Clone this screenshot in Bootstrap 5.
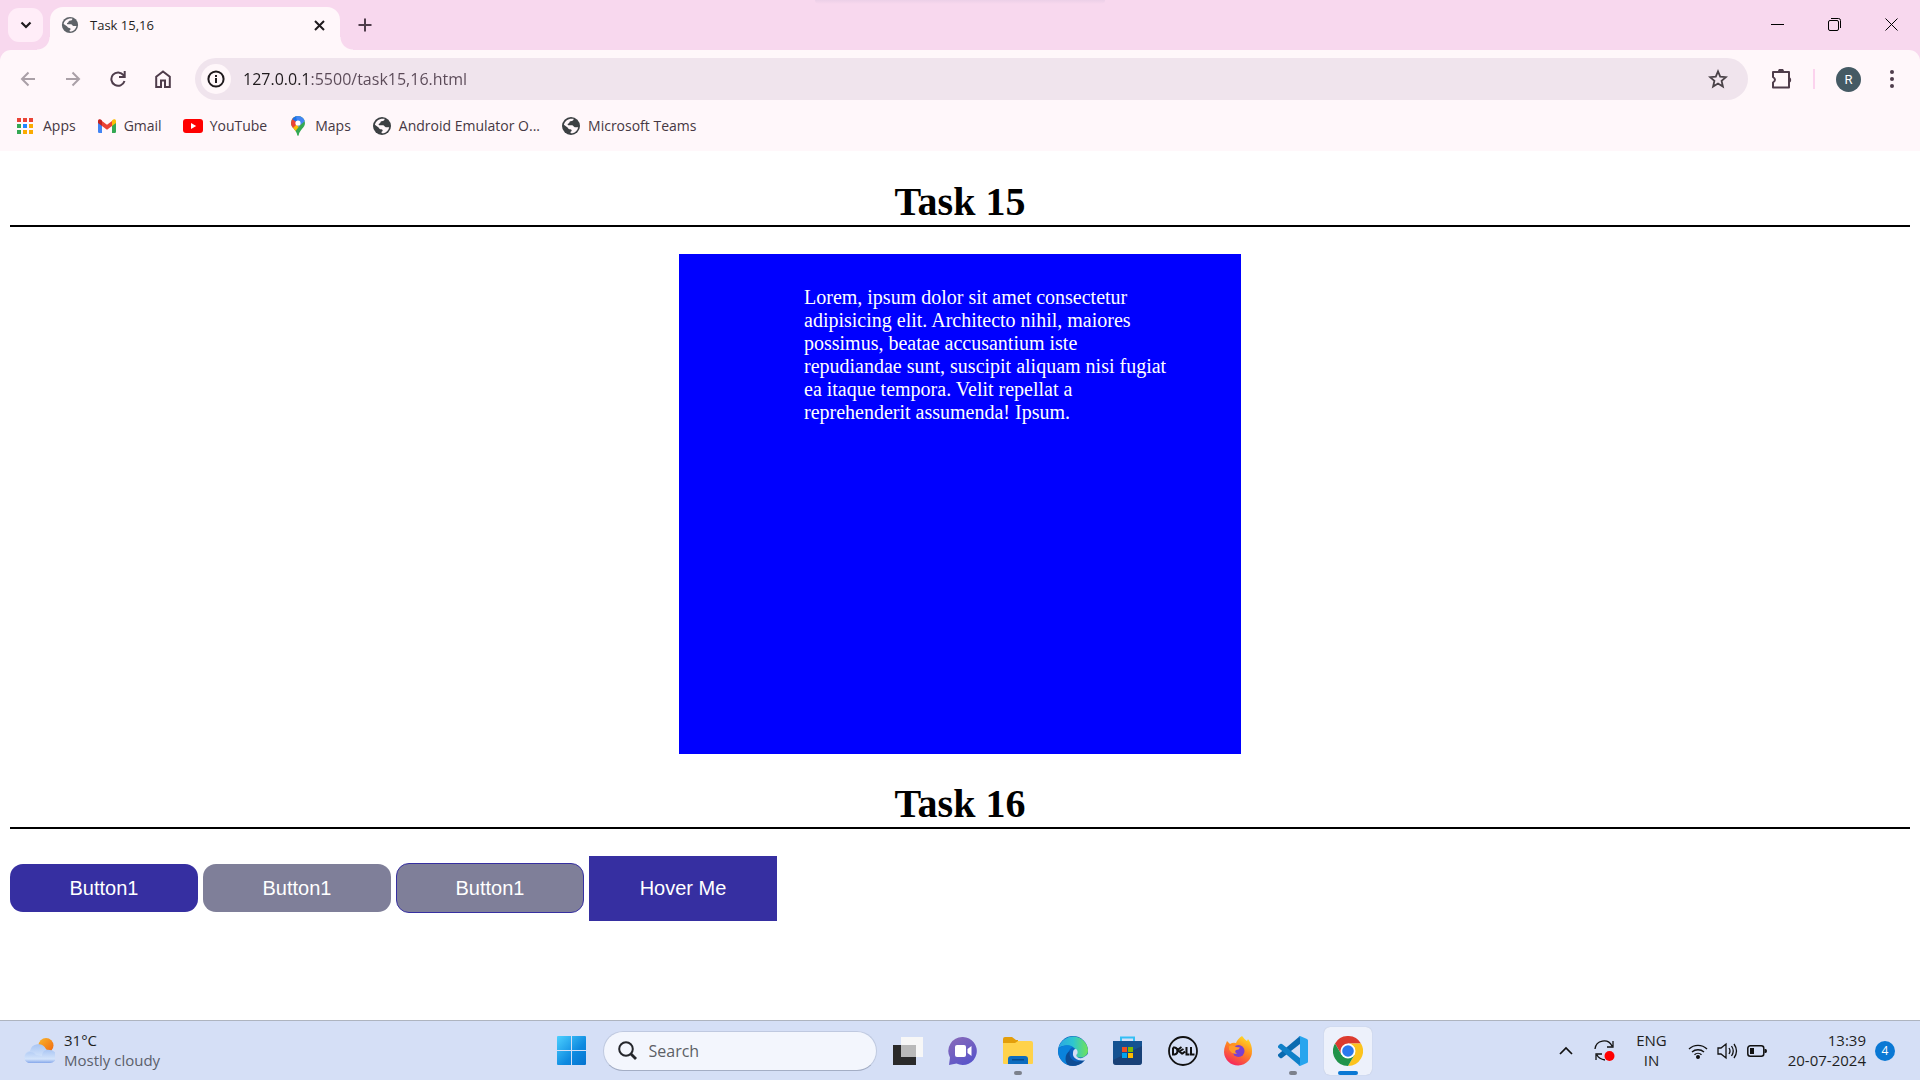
<!DOCTYPE html>
<html lang="en">
<head>
<meta charset="utf-8">
<meta name="viewport" content="width=device-width, initial-scale=1">
<title>Task 15,16</title>
<link href="https://cdn.jsdelivr.net/npm/bootstrap@5.3.0/dist/css/bootstrap.min.css" rel="stylesheet">
<style>
  :root { --ui: "Open Sans", "Noto Sans", sans-serif; --ink: #4f3d4b; }
  body { font-family: var(--ui); font-size: 14px; line-height: 20px; color: #1f1f1f; background: #fff; }
  svg { display: block; flex: none; }
  button { font-family: inherit; }
  .plain { border: 0; background: none; padding: 0; display: flex; align-items: center; justify-content: center; }

  /* tab strip */
  .tabstrip { background: #f8d8ee; height: 50px; padding-left: 8px; }
  .strip-shade { position: absolute; top: 0; left: 50%; width: 290px; height: 4px; margin-left: -145px; background: linear-gradient(#ecd0e8, #f8d8ee); border-radius: 0 0 4px 4px; }
  .tab-search { width: 35px; height: 34px; border-radius: 11px; background: #ffedf8; margin: 8px 7px 0 0; }
  .page-tab { position: relative; width: 290px; height: 43px; margin-top: 7px; padding: 0 11px; gap: 11px; background: #fff7fa; border-radius: 13px 13px 0 0; font-size: 13px; padding-bottom: 7px; }
  .page-tab::before, .page-tab::after { content: ""; position: absolute; bottom: 0; width: 13px; height: 13px; }
  .page-tab::before { left: -13px; background: radial-gradient(circle at 0 0, transparent 12px, #fff7fa 13px); }
  .page-tab::after { right: -13px; background: radial-gradient(circle at 100% 0, transparent 12px, #fff7fa 13px); }
  .new-tab { width: 34px; height: 34px; margin: 8px 0 0 8px; }
  .win-btn { width: 57px; height: 49px; }

  /* toolbar */
  .chrome-body { background: #f8d8ee; }
  .chrome-inner { background: #fff7fa; border-radius: 11px 11px 0 0; }
  .toolbar { height: 58px; padding: 0 6px 0 5px; }
  .nav-btn { width: 45px; height: 42px; color: var(--ink); }
  .nav-off { color: #aaa0a7; }
  .omnibox { height: 42px; border-radius: 21px; background: #f0e4ed; margin: 0 11px 0 10px; padding: 0 20px 0 6px; }
  .site-info { width: 30px; height: 30px; border-radius: 15px; background: #fff7fa; color: #1f1a1d; margin-right: 12px; }
  .url-field { border: 0; outline: 0; padding: 0; min-width: 0; font-size: 16px; line-height: 24px; color: #5a4957; background: linear-gradient(90deg, #1f1a1d 66px, #5a4957 66px); -webkit-background-clip: text; background-clip: text; -webkit-text-fill-color: transparent; }
  .tool-sep { width: 2px; height: 20px; background: #fcd3ee; margin: 0 21px 0 9px; }
  .avatar-dot { width: 25px; height: 25px; border-radius: 50%; background: #455a64; color: #fff; font: 13px Roboto, sans-serif; }
  .bookmarks { height: 43px; padding: 0 16px 7px; gap: 21px; }
  .bookmarks a { color: #463843; text-decoration: none; gap: 7px; white-space: nowrap; }
  .bookmarks svg { width: 20px; height: 20px; }

  /* page */
  .page-body { font-family: "Liberation Serif", serif; font-size: 20px; line-height: 23px; color: #000; padding: 28px 10px 20px; }
  .page-body h1 { font-size: 40px; line-height: 46px; font-weight: 700; text-align: center; border-bottom: 2px solid #000; margin: 0 0 27px; }
  .blue-box { width: 562px; height: 500px; background: #00f; color: #fff; padding: 32px 62px 0 125px; margin: 0 auto 27px; }
  .demo-btn { width: 188px; font-family: "Liberation Sans", sans-serif; font-size: 20px; line-height: 24px; color: #fff; border: 0; border-radius: 13px; padding: 12px 0; background: #362fa1; }
  .demo-grey { background: #7f7f99; }
  .demo-line { background: #7f7f99; border: 1px solid #362fa1; }
  .demo-hover { border-radius: 0; padding: 20px 0 21px; }
  .btn-row { gap: 5px; }

  /* taskbar */
  .taskbar { height: 60px; background: #d5dff6; border-top: 1px solid #aeb4bf; font-size: 15px; }
  .two-line { padding-bottom: 2px; }
  .task-mid { gap: 7px; }
  .tile { position: relative; width: 48px; height: 48px; border-radius: 6px; }
  .tile-on { background: #edf1fb; box-shadow: 0 0 1px #a9b3c9; }
  .run-mark { position: absolute; bottom: 0; left: 50%; width: 8px; height: 4px; margin-left: -4px; border-radius: 2px; background: #7c818c; }
  .tile-on .run-mark { width: 20px; margin-left: -10px; background: #0a78d4; }
  .search-pill { width: 274px; height: 40px; border-radius: 20px; background: #f3f6fd; border: 1px solid #bfc9e0; border-bottom-color: #a4aec5; padding: 0 14px; gap: 12px; }
  .search-pill input { border: 0; outline: 0; background: none; padding: 0; width: 190px; font-size: 16px; }
  .search-pill input::placeholder { color: #5c5f66; opacity: 1; }
  .weather { padding-left: 24px; gap: 9px; }
  .muted-line { color: #5b606b; }
  .tray { padding-right: 25px; gap: 21px; }
  .tray-set { gap: 9px; }
  .tray-clock { gap: 9px; }
  .notice { width: 20px; height: 20px; border-radius: 50%; background: #0a78d4; color: #fff; font-size: 12px; }
</style>
<script src="https://cdn.jsdelivr.net/npm/bootstrap@5.3.0/dist/js/bootstrap.bundle.min.js"></script>
</head>
<body class="d-flex flex-column min-vh-100">

<svg width="0" height="0" class="position-absolute" aria-hidden="true">
  <symbol id="globe" viewBox="0 0 20 20">
    <circle cx="10" cy="10" r="9" fill="currentColor"/>
    <path d="M12.500 2.800C13 4.500 11.500 5.200 9.500 5.200 8.200 5.200 8.800 7 7.500 7.400 6.500 7.700 6.300 8.600 7.200 9.200H11C12.500 9.200 12.600 11 13.800 11.200H17.200C16.800 14 14.500 16.600 11.500 17.200 9.800 17.400 9.300 16.800 9.600 15.700 11 15.300 11.200 13.500 9.400 13.200 7.500 13.200 7.200 12.300 6.600 11.400L2.900 8.800C3.500 5 7.500 2 12.500 2.800Z" fill="#fff7fa"/>
  </symbol>
</svg>

<header>
  <div class="tabstrip d-flex position-relative">
    <div class="strip-shade"></div>
    <button class="plain tab-search" aria-label="Search tabs"><svg width="12" height="8" fill="none" stroke="#1f1a1d" stroke-width="2.200"><path d="M1.500 1.500 6 6l4.500-4.500"/></svg></button>
    <div class="page-tab d-flex align-items-center">
      <svg width="18" height="18" style="color:#5f6368"><use href="#globe"/></svg>
      <span class="me-auto">Task 15,16</span>
      <button class="plain px-1" aria-label="Close tab"><svg width="11" height="11" stroke="#1f1a1d" stroke-width="2"><path d="M1 1l9 9M10 1l-9 9"/></svg></button>
    </div>
    <button class="plain new-tab" aria-label="New tab"><svg width="14" height="14" stroke="#4f3d4b" stroke-width="2"><path d="M7 0.500v13M0.500 7h13"/></svg></button>
    <div class="d-flex ms-auto">
      <button class="plain win-btn" aria-label="Minimize"><svg width="13" height="13" stroke="#000"><path d="M0 6.500h13"/></svg></button>
      <button class="plain win-btn" aria-label="Restore"><svg width="13" height="13" fill="none" stroke="#000"><rect x="0.500" y="2.500" width="10" height="10" rx="1.500"/><path d="M3 .5h7.500a2 2 0 0 1 2 2V10"/></svg></button>
      <button class="plain win-btn" aria-label="Close"><svg width="13" height="13" stroke="#000"><path d="M.5.500l12 12M12.500.500l-12 12"/></svg></button>
    </div>
  </div>

  <div class="chrome-body"><div class="chrome-inner">
    <div class="toolbar d-flex align-items-center">
      <button class="plain nav-btn nav-off" aria-label="Back"><svg width="16" height="16" fill="none" stroke="currentColor" stroke-width="2"><path d="M15 8H2M8.500 1.500 2 8l6.500 6.500"/></svg></button>
      <button class="plain nav-btn nav-off" aria-label="Forward"><svg width="16" height="16" fill="none" stroke="currentColor" stroke-width="2"><path d="M1 8h13M7.500 1.500 14 8l-6.500 6.500"/></svg></button>
      <button class="plain nav-btn" aria-label="Reload"><svg width="16" height="16" fill="none" stroke="currentColor" stroke-width="2"><path d="M14.500 10A6.700 6.700 0 1 1 13.500 4.200L14 5M14.700 0v6H9"/></svg></button>
      <button class="plain nav-btn" aria-label="Home"><svg width="16" height="18" fill="none" stroke="currentColor" stroke-width="2"><path d="M1.200 6.700 8 1.500l6.800 5.200V17H10v-6.500H6V17H1.200z"/></svg></button>
      <div class="omnibox d-flex align-items-center flex-grow-1">
        <button class="plain site-info" aria-label="Site information"><svg width="18" height="18" fill="none" stroke="currentColor" stroke-width="2"><circle cx="9" cy="9" r="7.600"/><path d="M9 8v5M9 5v2"/></svg></button>
        <input class="url-field flex-grow-1" type="text" aria-label="Address" value="127.0.0.1:5500/task15,16.html">
        <button class="plain" aria-label="Bookmark"><svg width="20" height="20" fill="none" stroke="#4a4248" stroke-width="1.800"><path d="M10 2.400l2.200 5.300 5.700.5-4.300 3.700 1.300 5.600-4.900-3-4.900 3 1.300-5.600L2.100 8.200l5.700-.5z"/></svg></button>
      </div>
      <button class="plain nav-btn" aria-label="Extensions"><svg width="21" height="21" viewBox="0 1 21 21"><path d="M2 4h16v15.500H2v-5q4-2.700 0-5.500z" fill="none" stroke="#4f3d4b" stroke-width="2" stroke-linejoin="round"/><path d="M7 3.500a3 3 0 0 1 6 0zM18 9a3 3 0 0 1 0 5.800z" fill="#4f3d4b"/></svg></button>
      <span class="tool-sep"></span>
      <button class="plain avatar-dot" aria-label="Profile">R</button>
      <button class="plain nav-btn ms-2" aria-label="Menu"><svg width="4" height="18" fill="#4f3d4b"><circle cx="2" cy="2" r="2"/><circle cx="2" cy="9" r="2"/><circle cx="2" cy="16" r="2"/></svg></button>
    </div>
    <nav class="bookmarks d-flex align-items-center" aria-label="Bookmarks">
      <a href="#" class="d-flex align-items-center"><svg viewBox="0 0 20 20"><path fill="#ea4335" d="M1 2h4v4H1zM7 2h4v4H7zM13 2h4v4h-4z"/><path fill="#34a853" d="M1 8h4v4H1zM1 14h4v4H1z"/><path fill="#1e88ff" d="M7 8h4v4H7z"/><path fill="#fbab00" d="M13 8h4v4h-4zM7 14h4v4H7zM13 14h4v4h-4z"/></svg>Apps</a>
      <a href="#" class="d-flex align-items-center"><svg viewBox="0 0 20 20"><path fill="#4285f4" d="M1 6l4 3v8H2.200Q1 17 1 15.800z"/><path fill="#34a853" d="M15 9l4-3v9.800q0 1.200-1.200 1.200H15z"/><path fill="#ea4335" d="M5 5l5 3.800L15 5v5l-5 3.800L5 10z"/><path fill="#c5221f" d="M1 5.300C1 3 3.200 2.700 5 4.500V10L1 7z"/><path fill="#fbbc04" d="M19 5.300C19 3 16.800 2.700 15 4.500V10l4-3z"/></svg>Gmail</a>
      <a href="#" class="d-flex align-items-center"><svg viewBox="0 0 20 20"><rect y="3" width="20" height="14" rx="3" fill="#f00"/><path fill="#fff" d="M8 7l5.200 3L8 13z"/></svg>YouTube</a>
      <a href="#" class="d-flex align-items-center"><svg viewBox="0 0 20 20"><clipPath id="pin"><path d="M10 0a7 7 0 0 1 7 7c0 5-5.500 6.500-6.300 12.300q-.7 1-1.400 0C8.500 13.500 3 12 3 7a7 7 0 0 1 7-7z"/></clipPath><g clip-path="url(#pin)"><path fill="#34a853" d="M0 0h20v20H0z"/><path fill="#fbbc04" d="M0 14 10 3l5 3L4 19z"/><path fill="#ea4335" d="M0 0h6l4 7-7 7z"/><path fill="#1a73e8" d="M4 0h5l1 7-6-4z"/><path fill="#4285f4" d="M8 0h9l1 4-8 7z"/></g><circle cx="10" cy="7" r="2.600" fill="#fff"/></svg>Maps</a>
      <a href="#" class="d-flex align-items-center"><svg style="color:#3c4043"><use href="#globe"/></svg>Android Emulator O...</a>
      <a href="#" class="d-flex align-items-center"><svg style="color:#3c4043"><use href="#globe"/></svg>Microsoft Teams</a>
    </nav>
  </div></div>
</header>

<main class="page-body flex-grow-1">
  <h1>Task 15</h1>
  <div class="blue-box">Lorem, ipsum dolor sit amet consectetur adipisicing elit. Architecto nihil, maiores possimus, beatae accusantium iste repudiandae sunt, suscipit aliquam nisi fugiat ea itaque tempora. Velit repellat a reprehenderit assumenda! Ipsum.</div>
  <h1>Task 16</h1>
  <div class="d-flex align-items-baseline btn-row">
    <button class="demo-btn">Button1</button>
    <button class="demo-btn demo-grey">Button1</button>
    <button class="demo-btn demo-line">Button1</button>
    <button class="demo-btn demo-hover">Hover Me</button>
  </div>
</main>

<footer class="taskbar d-flex align-items-center">
  <div class="weather d-flex align-items-center" style="flex:1 1 0">
    <svg width="31" height="27" viewBox="0 0 31 27">
      <defs><linearGradient id="sun" x1="0" y1="0" x2="1" y2="1"><stop stop-color="#f9b72c"/><stop offset="1" stop-color="#f0640f"/></linearGradient>
      <linearGradient id="cl" x1="0" y1="0" x2="0" y2="1"><stop stop-color="#a9c5f3"/><stop offset=".7" stop-color="#d4e4fb"/><stop offset="1" stop-color="#86a7ea"/></linearGradient></defs>
      <circle cx="22" cy="8.500" r="7.500" fill="url(#sun)"/>
      <path d="M7 26a6 6 0 0 1-1-12A8.500 8.500 0 0 1 22 12q5 3 3 14z" fill="url(#cl)"/>
      <path d="M6 26a5.500 5.500 0 0 1 0-11q4 0 6 3l6 1a6 6 0 0 1 8-6 6.500 6.500 0 0 1 0 13z" fill="url(#cl)"/>
    </svg>
    <div class="two-line"><div>31°C</div><div class="muted-line">Mostly cloudy</div></div>
  </div>

  <div class="task-mid d-flex align-items-center">
    <button class="plain tile" aria-label="Start"><svg width="29" height="29"><defs><linearGradient id="win" x1="0" y1="0" x2="1" y2="1"><stop stop-color="#4cd0ff"/><stop offset=".6" stop-color="#0e8ae0"/><stop offset="1" stop-color="#0573cf"/></linearGradient></defs><path fill="url(#win)" d="M0 1q0-1 1-1h13v14H0zM15 0h13q1 0 1 1v13H15zM0 15h14v14H1q-1 0-1-1zM15 15h14v13q0 1-1 1H15z"/></svg></button>
    <label class="search-pill d-flex align-items-center"><svg width="19" height="19" fill="none" stroke="#24262b"><circle cx="8" cy="8" r="6.800" stroke-width="2"/><path d="M13 13l5 5" stroke-width="2.800"/></svg><input type="text" placeholder="Search" aria-label="Search"></label>
    <button class="plain tile" aria-label="Task view"><svg width="30" height="28"><path fill="#2a2a2a" d="M0 8h23v20H0z"/><path fill="#f7f7f7" d="M8 0h22v20H8z"/><path fill="#b9b9b9" d="M8 8h15v12H8z"/></svg></button>
    <button class="plain tile" aria-label="Chat"><svg width="30" height="30"><defs><linearGradient id="ch" x1="0" y1="0" x2=".6" y2="1"><stop stop-color="#8b6bb8"/><stop offset="1" stop-color="#5a55c9"/></linearGradient></defs><path fill="url(#ch)" d="M15 1a14 14 0 1 1-6.500 26.500L1 29l1-7.500A14 14 0 0 1 15 1z"/><rect x="7" y="9" width="11" height="12" rx="2" fill="#fff"/><path fill="#fff" d="M19.500 13l4-3v10l-4-3z"/></svg></button>
    <button class="plain tile" aria-label="File Explorer"><svg width="30" height="28"><path fill="#e39e0b" d="M0 2q0-2 2-2h7l4 3h2v5H0z"/><path fill="#ffd24a" d="M0 6h12l3-2h13q2 0 2 2v20q0 1-1 1H1q-1 0-1-1z"/><path fill="#0d6cbf" d="M5 27v-5q0-3 3-3h14q3 0 3 3v5z"/><path fill="#064a8c" d="M9 22h12v1.500H9z"/></svg><span class="run-mark"></span></button>
    <button class="plain tile" aria-label="Edge"><svg width="30" height="30" viewBox="0 0 30 30"><defs><linearGradient id="eg"><stop stop-color="#2aa7e4"/><stop offset=".5" stop-color="#2fc6cf"/><stop offset="1" stop-color="#70e356"/></linearGradient></defs><circle cx="15" cy="15" r="15" fill="#0b62c0"/><path fill="url(#eg)" d="M.5 12A15 15 0 0 1 30 14c0 6-5 8-9 7.500-3-.3-3-2-2-3.500C20 12 10 6 .5 12z"/><path fill="#0a83dc" d="M.1 14C2 9 12 8 15 11c-5 2-7 9-3 18.500A15 15 0 0 1 .1 14z"/><path fill="#0d4c94" d="M12 15c-2 7 4 12 11 10 2-.5 4-2 4.500-2A15 15 0 0 1 10 29C6 25 7 17 12 15z"/><path fill="#d5dff6" d="M19.500 17.500C18 19 18 21 21 22q4 1 9-4v6l-2.500 0C21 26 14 22 15 17q0-4 3-4 2 1 1.500 4.500z"/></svg></button>
    <button class="plain tile" aria-label="Microsoft Store"><svg width="29" height="29"><path d="M8 6V1.500h13V6" fill="none" stroke="#35bff5" stroke-width="2"/><path fill="#155291" d="M0 5h29v21q0 3-3 3H3q-3 0-3-3z"/><path fill="#1d3765" d="M0 24 29 10v16q0 3-3 3H3q-3 0-3-3z" opacity=".6"/><path fill="#f25022" d="M9 11h5v5H9z"/><path fill="#7fba00" d="M15 11h5v5h-5z"/><path fill="#00a4ef" d="M9 17h5v5H9z"/><path fill="#ffb900" d="M15 17h5v5h-5z"/></svg></button>
    <button class="plain tile" aria-label="Dell"><svg width="30" height="30" fill="none" stroke="#111"><circle cx="15" cy="15" r="14" stroke-width="1.800"/><path stroke-width="2" d="M5 11.500v7h1.500q3-.5 3-3.500t-3-3.500H5M13.500 11 9.500 14l5 4M15.500 13l-3.500 2M17 15.500l-3 2.500M18.500 11v7.500h3M23 11v7.500h3.500"/></svg></button>
    <button class="plain tile" aria-label="Firefox"><svg width="30" height="30" viewBox="0 0 30 30"><defs><linearGradient id="ff" x1=".8" y1="0" x2=".3" y2="1"><stop stop-color="#ffe226"/><stop offset=".45" stop-color="#ff8a1f"/><stop offset="1" stop-color="#f5225f"/></linearGradient></defs><path fill="url(#ff)" d="M19 0c2 2 3 4 5 5l1-2c3 4 4 8 4 12a14 14 0 0 1-28 1C1 11 3 8 4 5l3 3q3-2 6-1c1-3 3-5 6-7z"/><circle cx="15.500" cy="15" r="6" fill="#7a3fd0"/><path fill="#ff9a2a" d="M6 10q4-2 7 1l4 .5q-1 2.500-4 2.500-2 2 1 3.500c-3 1-6-.5-8-4z"/></svg></button>
    <button class="plain tile" aria-label="Visual Studio Code"><svg width="30" height="30" viewBox="0 0 30 30"><path fill="#0a6ab0" d="M22 0v8L4 22q-1 .5-2 0l-2-2q-.5-1 0-1.500z"/><path fill="#1080c8" d="M22 30v-8L4 8q-1-.5-2 0L0 10q-.5 1 0 1.500z"/><path fill="#27a5ee" d="M22 0l7 3q1 .5 1 1.500v21q0 1-1 1.500l-7 3q-1 0-1.500-1 1.500 0 1.500-1V2q0-1-1.500-1z"/></svg><span class="run-mark"></span></button>
    <button class="plain tile tile-on" aria-label="Chrome"><svg width="30" height="30" viewBox="0 0 30 30"><path fill="#dc3b2f" d="M2 7.500a15 15 0 0 1 26 0H15l-6.500 11z"/><path fill="#fcc31e" d="M28 7.500A15 15 0 0 1 15 30l6.500-11.300L22 12l-5-4.500z"/><path fill="#21934a" d="M2 7.500A15 15 0 0 0 15 30l6.500-11.300L15 22l-6.500-3.300z"/><circle cx="15" cy="15" r="7.500" fill="#fff"/><circle cx="15" cy="15" r="5.800" fill="#2a79ee"/></svg><span class="run-mark"></span></button>
  </div>

  <div class="tray d-flex align-items-center justify-content-end" style="flex:1 1 0">
    <svg width="14" height="9" fill="none" stroke="#111" stroke-width="1.700"><path d="M1 8l6-6 6 6"/></svg>
    <svg width="21" height="22" fill="none" stroke="#111" stroke-width="1.300"><path d="M1 9a9 9 0 0 1 17-3M19 1v6h-6M2 20v-6h6M3 15q2 4 8 5"/><circle cx="15.500" cy="16" r="5" fill="red" stroke="none"/></svg>
    <div class="two-line text-center">ENG<br>IN</div>
    <div class="tray-set d-flex align-items-center">
      <svg width="20" height="16" fill="none" stroke="#111" stroke-width="1.400"><path d="M1 6a13 13 0 0 1 18 0M4 9a9 9 0 0 1 12 0M6.500 11.800a5 5 0 0 1 7 0"/><circle cx="10" cy="14" r="1.300" fill="#111"/></svg>
      <svg width="21" height="18" fill="none" stroke="#111" stroke-width="1.300"><path d="M1 6h3l5-4v14l-5-4H1zM12 6q2 3 0 6M14.500 4q3.500 5 0 10M17 2q5 7 0 14"/></svg>
      <svg width="20" height="14"><rect x=".8" y="1.800" width="16" height="10.500" rx="2.500" fill="none" stroke="#111" stroke-width="1.500"/><path fill="#111" d="M3 4h4v6H3zM17.500 5h1q1.500 0 1.500 2t-1.500 2h-1z"/></svg>
    </div>
    <div class="tray-clock d-flex align-items-center">
      <div class="two-line text-end">13:39<br>20-07-2024</div>
      <span class="notice d-flex align-items-center justify-content-center">4</span>
    </div>
  </div>
</footer>
</body>
</html>
